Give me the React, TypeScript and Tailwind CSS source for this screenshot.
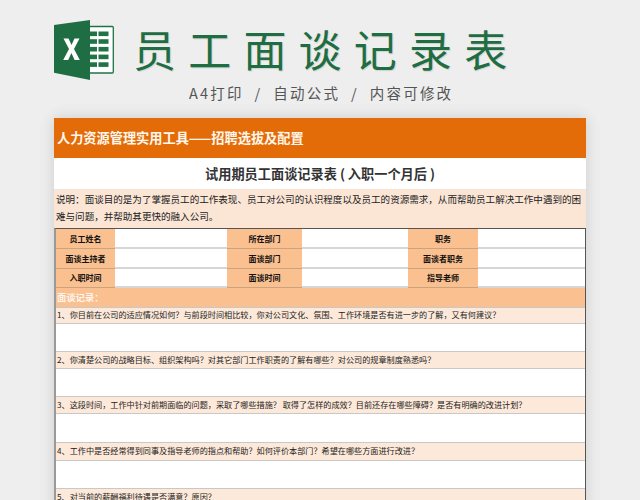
import React from 'react';

const cjk = { fontFamily: '"Noto Sans CJK SC", "Noto Sans", sans-serif' };

const infoRows = [
    { labels: ['员工姓名', '所在部门', '职务'], height: 'h-[20px]' },
    { labels: ['面谈主持者', '面谈部门', '面谈者职务'], height: 'h-[20px]' },
    { labels: ['入职时间', '面谈时间', '指导老师'], height: 'h-[19px]' },
];

const questions = [
    { text: '1、你目前在公司的适应情况如何？与前段时间相比较，你对公司文化、氛围、工作环境是否有进一步的了解，又有何建议？', head: 'h-[16px]', body: 'h-[28px]' },
    { text: '2、你清楚公司的战略目标、组织架构吗？对其它部门工作职责的了解有哪些？对公司的规章制度熟悉吗？', head: 'h-[17px]', body: 'h-[28px]' },
    { text: '3、这段时间，工作中针对前期面临的问题，采取了哪些措施？ 取得了怎样的成效？目前还存在哪些障碍？是否有明确的改进计划？', head: 'h-[17px]', body: 'h-[29px]' },
    { text: '4、工作中是否经常得到同事及指导老师的指点和帮助？如何评价本部门？希望在哪些方面进行改进？', head: 'h-[18px]', body: 'h-[28px]' },
    { text: '5、对当前的薪酬福利待遇是否满意？原因？', head: 'h-[18px]', body: 'h-[28px]' },
];

function ExcelLogo() {
    return (
        <svg width="60" height="60" viewBox="0 0 60 60" className="shrink-0">
            <rect x="34" y="6.5" width="25.3" height="46.5" fill="#fff" stroke="#217346" strokeWidth="1.3" rx="1" />
            {[0, 1, 2, 3, 4].map((i) => (
                <g key={i} fill="#217346">
                    <rect x="36" y={11.5 + i * 7.7} width="7" height="4.6" />
                    <rect x="44.5" y={11.5 + i * 7.7} width="10" height="4.6" />
                </g>
            ))}
            <path d="M0 5 L36 0 V60 L0 52.7 Z" fill="#1f6e43" />
            <path d="M9.5 18.5 h5 l3 6.5 l3 -6.5 h5 l-5.5 10.5 l5.8 11 h-5.2 l-3.2 -7 l-3.2 7 h-5 l5.8 -11 Z" fill="#fff" />
        </svg>
    );
}

export default function App() {
    return (
        <div className="h-[500px] w-[640px] overflow-hidden bg-[#eeeeee]" style={cjk}>

            {/* Header */}
            <div className="flex h-[118px] flex-col">
                <div className="flex h-[82px] items-start pl-[54px] pt-[20px]">
                    <ExcelLogo />
                    <div className="ml-[19px] mt-[-7px] whitespace-nowrap text-[43px] leading-[70px] tracking-[12.2px] text-[#1f6e43] [text-shadow:1px_1px_1px_rgba(0,0,0,0.12)]">
                        员工面谈记录表
                    </div>
                </div>
                <div className="whitespace-nowrap pl-[189px] text-[14.5px] leading-[22px] tracking-[2.2px] text-[#555555]">
                    A4打印&nbsp;&nbsp;/&nbsp;&nbsp;自动公式&nbsp;&nbsp;/&nbsp;&nbsp;内容可修改
                </div>
            </div>

            {/* Sheet */}
            <div className="ml-[54px] w-[532px] bg-white shadow-[0_0_14px_rgba(0,0,0,0.14)]">
                <div className="flex h-[40px] items-center whitespace-nowrap bg-[#e36c09] pl-[3px] text-[13.2px] font-bold text-[#fff7ec]">
                    人力资源管理实用工具——招聘选拔及配置
                </div>
                <div className="flex h-[31px] items-center justify-center whitespace-nowrap text-[13.2px] font-bold text-[#333333]">
                    试用期员工面谈记录表 ( 入职一个月后 )
                </div>
                <div className="h-[39px] whitespace-nowrap bg-[#fbe6d6] px-[2px] pt-[2px] text-[9.55px] leading-[17px] text-[#222222]">
                    说明：面谈目的是为了掌握员工的工作表现、员工对公司的认识程度以及员工的资源需求，从而帮助员工解决工作中遇到的困
                    <br />
                    难与问题，并帮助其更快的融入公司。
                </div>

                <div className="border-l-2 border-r border-t border-l-[#999999] border-r-[#555555] border-t-[#555555]">
                    {infoRows.map((row) => (
                        <div key={row.labels[0]} className={`grid grid-cols-[59px_112px_75px_106px_70px_1fr] text-[8px] font-bold text-[#111111] ${row.height}`}>
                            <div className="flex items-center justify-center border-b border-[#c9a47f] bg-[#fac090]">{row.labels[0]}</div>
                            <div className="border-b-2 border-[#d6d6d6]" />
                            <div className="flex items-center justify-center border-b border-[#c9a47f] bg-[#fac090]">{row.labels[1]}</div>
                            <div className="border-b-2 border-[#d6d6d6]" />
                            <div className="flex items-center justify-center border-b border-[#c9a47f] bg-[#fac090]">{row.labels[2]}</div>
                            <div className="border-b-2 border-[#d6d6d6]" />
                        </div>
                    ))}

                    <div className="flex h-[20px] items-center border-b border-[#c8c8c8] bg-[#fac090] pl-[1px] text-[9.3px] font-medium text-white">
                        面谈记录：
                    </div>

                    {questions.map((q) => (
                        <div key={q.text}>
                            <div className={`flex items-center whitespace-nowrap border-b border-[#c8c8c8] bg-[#fde9d9] pl-[1px] text-[8.15px] text-[#222222] ${q.head}`}>
                                {q.text}
                            </div>
                            <div className={`border-b border-[#c8c8c8] bg-white ${q.body}`} />
                        </div>
                    ))}
                </div>
            </div>
        </div>
    );
}
